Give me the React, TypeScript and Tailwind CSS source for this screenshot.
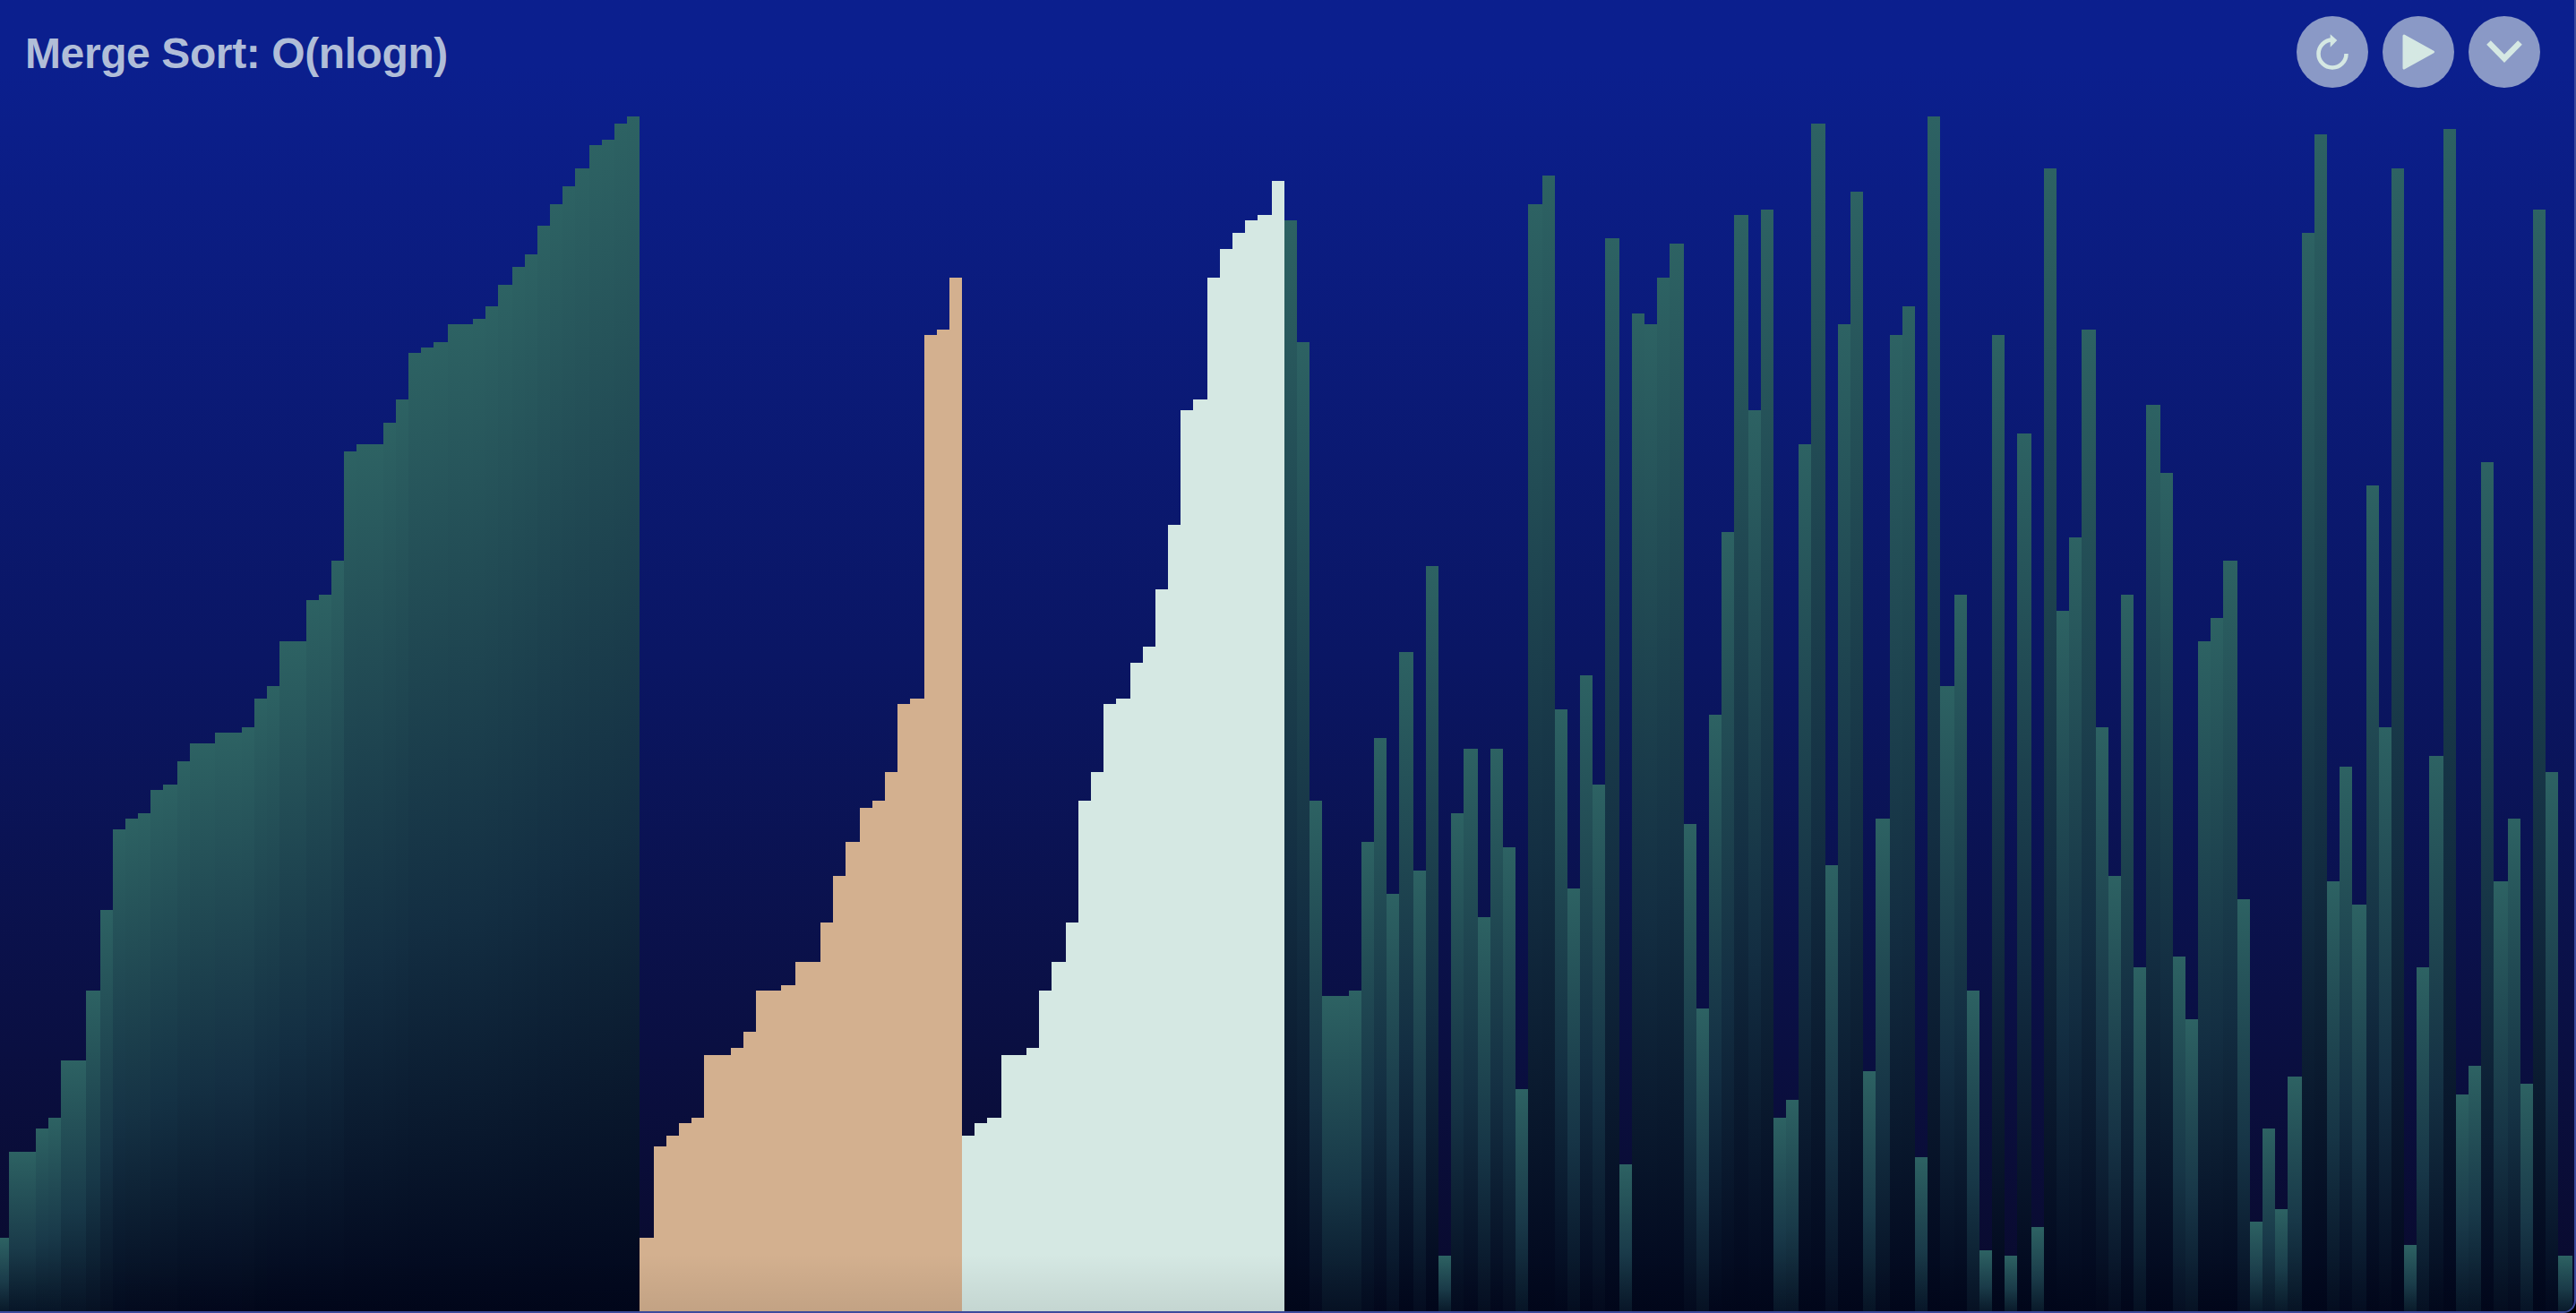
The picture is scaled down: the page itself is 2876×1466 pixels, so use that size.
import React from "react";

const TOPS: number[] = [
  1382,1286,1286,1260,1248,1184,1184,1106,1016,926,914,908,882,876,850,830,830,818,818,812,780,766,716,716,670,664,626,504,496,496,472,446,394,388,382,362,362,356,342,318,298,284,252,228,208,188,162,156,138,130,
  1382,1280,1268,1254,1248,1178,1178,1170,1152,1106,1106,1100,1074,1074,1030,978,940,902,894,862,786,780,374,368,310,
  1268,1254,1248,1178,1178,1170,1106,1074,1030,894,862,786,780,740,722,658,586,458,446,310,278,260,246,240,202,
  246,382,894,1112,1112,1106,940,824,998,728,972,632,1402,908,836,1024,836,946,1216,228,196,792,992,754,876,266,1300,350,362,310,272,920,1126,798,
  594,240,458,234,1248,1228,496,138,966,362,214,1196,914,374,342,1292,130,766,664,1106,1396,374,1402,484,1370,188,682,600,368,812,978,664,1080,452,
  528,1068,1138,716,690,626,1004,1364,1260,1350,1202,260,150,984,856,1010,542,812,188,1390,1080,844,144,1222,1190,516,984,914,1210,234,862,1402,
];

const BOTTOM = 1464;
const edge = (i: number) => 2 * Math.round(-2 + 7.1875 * i);

const mix = (a: number[], b: number[], t: number) =>
  `rgb(${a.map((v, k) => Math.round(v + (b[k] - v) * t)).join(",")})`;

function tealGradient(height: number) {
  const t = Math.min(1, Math.max(0, (height - 60) / 640));
  const mid = mix([27, 62, 76], [19, 46, 66], t);
  const end = mix([10, 28, 46], [1, 6, 28], t);
  return `linear-gradient(to bottom, #2d6263, ${mid} 60%, ${end})`;
}

function RoundButton({ children }: { children: React.ReactNode }) {
  return (
    <button className="flex h-20 w-20 items-center justify-center rounded-full bg-[#8a99c6]">
      {children}
    </button>
  );
}

export default function App() {
  return (
    <div className="relative h-[1466px] w-[2876px] overflow-hidden bg-black">
      <div className="relative flex h-full w-full items-end overflow-hidden rounded-br-[14px] border-r-2 border-b-2 border-[#3d4a9c] bg-linear-to-b from-[#0b1f8e] from-5% via-[#0a1664] via-50% to-[#090a2c]">
        <div className="-ml-1 flex items-end">
          {TOPS.map((top, i) => {
            const height = BOTTOM - top;
            const solid = i >= 50 && i < 75 ? "bg-[#d3b08f]" : i >= 75 && i < 100 ? "bg-[#d5e8e3]" : "";
            return (
              <div
                key={i}
                className={solid}
                style={{
                  width: edge(i + 1) - edge(i),
                  height,
                  backgroundImage: solid ? undefined : tealGradient(height),
                }}
              />
            );
          })}
        </div>
        <div className="pointer-events-none absolute inset-x-0 bottom-0 h-16 bg-linear-to-b from-transparent to-[#00000014]" />
      </div>

      <div className="absolute inset-x-0 top-0 flex items-start justify-between pr-10 pl-[28px]">
        <h1 className="mt-[30px] text-[48px] leading-[60px] font-bold tracking-[-0.4px] text-[#b0bdd8] [font-family:'Liberation_Sans',sans-serif]">
          Merge Sort: O(nlogn)
        </h1>
        <div className="mt-[18px] flex gap-4">
          <RoundButton>
            <svg width="80" height="80" viewBox="0 0 80 80" fill="none">
              <path d="M55.5 42A15.5 15.5 0 1 1 40 26.5" stroke="#d5e8e3" strokeWidth="4.5" />
              <path d="M37.7 20.3L45.3 27L37.7 34.7Z" fill="#d5e8e3" />
            </svg>
          </RoundButton>
          <RoundButton>
            <svg width="80" height="80" viewBox="0 0 80 80">
              <path d="M24 22L56.5 40L24 58Z" fill="#d5e8e3" stroke="#d5e8e3" strokeWidth="3" strokeLinejoin="round" />
            </svg>
          </RoundButton>
          <RoundButton>
            <svg width="80" height="80" viewBox="0 0 80 80" fill="none">
              <path d="M22.5 29.5L40 47.3L57.5 29.5" stroke="#d5e8e3" strokeWidth="6.5" />
            </svg>
          </RoundButton>
        </div>
      </div>
    </div>
  );
}
